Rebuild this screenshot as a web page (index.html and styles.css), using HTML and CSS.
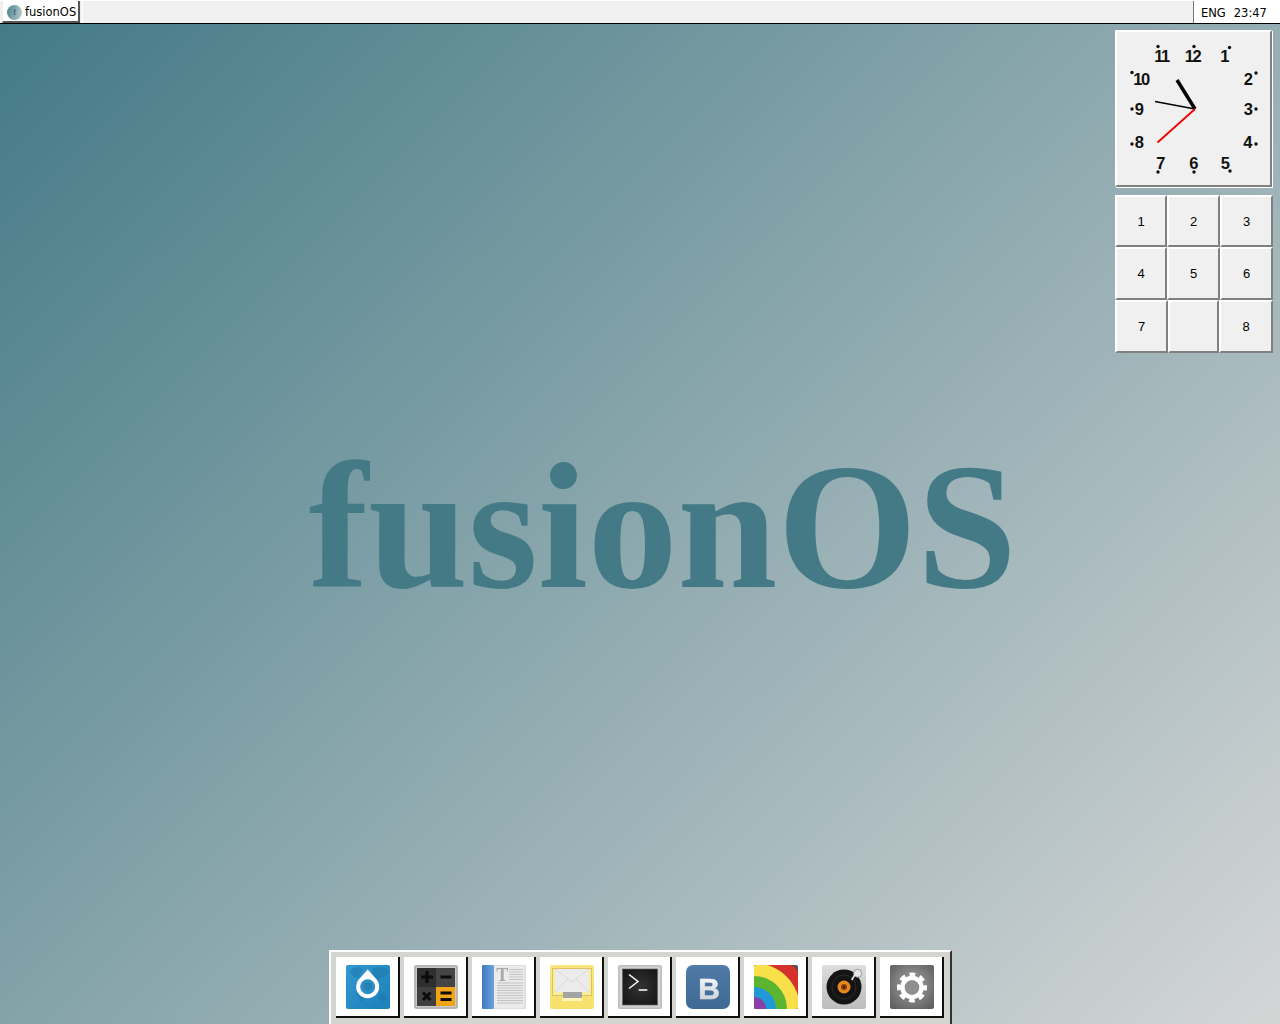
FILE: index.html
```html
<!DOCTYPE html>
<html lang="en">
<head>
<meta charset="utf-8">
<title>fusionOS</title>
<link rel="stylesheet" href="styles.css">
</head>
<body>
<header class="topbar">
  <button class="start"><span class="start-logo">f</span><span>fusionOS</span></button>
  <div class="tray"><span>ENG</span><span>23:47</span></div>
</header>
<main class="desktop">
  <div class="wordmark">fusionOS</div>
  <aside class="widgets">
    <div class="clock">
      <svg class="clock-face" viewBox="1117 32 153 153" width="153" height="153">
        <g class="clock-num" transform="translate(-1 0)">
          <text x="1162.5" y="62">11</text><text x="1193.5" y="62">12</text><text x="1225" y="62">1</text>
          <text x="1248.5" y="85">2</text><text x="1248.5" y="115">3</text><text x="1248" y="147.5">4</text>
          <text x="1225.5" y="168.5">5</text><text x="1194" y="168.5">6</text><text x="1161" y="168.5">7</text>
          <text x="1139.5" y="147.5">8</text><text x="1139.5" y="115">9</text><text x="1142" y="85">10</text>
        </g>
        <g class="clock-dot">
          <circle cx="1158" cy="46.5" r="1.7"/><circle cx="1194" cy="46.5" r="1.7"/><circle cx="1229.5" cy="47.5" r="1.7"/>
          <circle cx="1256" cy="73" r="1.7"/><circle cx="1256" cy="109" r="1.7"/><circle cx="1256" cy="144" r="1.7"/>
          <circle cx="1230" cy="171" r="1.7"/><circle cx="1194" cy="172" r="1.7"/><circle cx="1158" cy="172" r="1.7"/>
          <circle cx="1132" cy="144" r="1.7"/><circle cx="1132" cy="109" r="1.7"/><circle cx="1132" cy="72.5" r="1.7"/>
        </g>
        <line class="hand-hour" x1="1195" y1="109" x2="1177" y2="80"/>
        <line class="hand-minute" x1="1195" y1="109" x2="1155" y2="101.5"/>
        <line class="hand-second" x1="1195" y1="109" x2="1157.5" y2="142.5"/>
      </svg>
    </div>
    <div class="puzzle">
      <div class="row row-a">
        <div class="tile t52">1</div><div class="tile t53">2</div><div class="tile t53">3</div>
      </div>
      <div class="row row-b">
        <div class="tile t52">4</div><div class="tile t53">5</div><div class="tile t53">6</div>
      </div>
      <div class="row row-b">
        <div class="tile t53">7</div><div class="tile t51"></div><div class="tile t54">8</div>
      </div>
    </div>
  </aside>
  <nav class="dock">
    <button class="dock-btn">
      <svg class="icon" viewBox="0 0 44 44" width="44" height="44">
        <defs><linearGradient id="g1" x1="0" y1="0" x2="1" y2="1"><stop offset="0" stop-color="#3199d0"/><stop offset="1" stop-color="#1d80b8"/></linearGradient></defs>
        <rect width="44" height="44" rx="2" fill="url(#g1)"/>
        <path d="M6 3l8-1 3 3-3 4-2 4-4-1-4-5zM12 25l5 1 1 6-3 6-2-6-3-4zM27 3l9-1 7 3-2 6-6 2-3 3-3-4-3-5zM32 30l6-1 3 4-5 4-4-3z" fill="#1a6f9f" opacity=".4"/>
        <path d="M21.700 4.500 L29.500 13.300 A11.500 11.500 0 1 1 13.900 13.300Z" fill="#fff"/>
        <circle cx="21.7" cy="21.7" r="7.500" fill="#2c8fc3"/>
        <path d="M18 18l5-1 3 2-1 5-4 2-3-4z" fill="#1a6f9f" opacity=".45"/>
      </svg>
    </button>
    <button class="dock-btn">
      <svg class="icon" viewBox="0 0 44 44" width="44" height="44">
        <rect width="44" height="44" rx="2" fill="#c9c9c9"/>
        <rect x="1" y="1" width="42" height="42" rx="1.5" fill="none" stroke="#8a8a8a" stroke-width=".6"/>
        <rect x="3" y="3" width="19" height="19" fill="#2f2f2f"/>
        <rect x="22" y="3" width="19" height="19" fill="#454545"/>
        <rect x="3" y="22" width="19" height="19" fill="#404040"/>
        <rect x="22" y="22" width="19" height="19" fill="#f3a412"/>
        <path d="M7 12h12M13 6v12" stroke="#0c0c0c" stroke-width="3.200"/>
        <path d="M26.500 12h11" stroke="#0c0c0c" stroke-width="3"/>
        <path d="M9 27.500l7.500 7.500M16.500 27.500l-7.500 7.500" stroke="#0c0c0c" stroke-width="3"/>
        <path d="M26.500 28h11M26.500 34.500h11" stroke="#0c0c0c" stroke-width="2.800"/>
      </svg>
    </button>
    <button class="dock-btn">
      <svg class="icon" viewBox="0 0 44 44" width="44" height="44">
        <defs><linearGradient id="g3" x1="0" y1="0" x2="1" y2="0"><stop offset="0" stop-color="#3f78c0"/><stop offset="1" stop-color="#6ea3dd"/></linearGradient></defs>
        <rect x="10" width="34" height="44" rx="1" fill="#dedede"/>
        <rect x="12" y="1" width="30" height="42" fill="#ebebeb"/>
        <rect width="12" height="44" rx="1" fill="url(#g3)"/>
        <text class="doc-t" x="20.200" y="16">T</text>
        <path d="M27 4.500h14M27 7h14M27 9.500h14M27 12h14M27 14.500h14M15 18h26M15 20.500h26M15 23h26M15 25.500h26M15 28h26M15 30.500h26M15 33h26M15 35.500h26M15 38h26" stroke="#bcbcbc" stroke-width=".9"/>
      </svg>
    </button>
    <button class="dock-btn">
      <svg class="icon" viewBox="0 0 44 44" width="44" height="44">
        <defs><linearGradient id="g4" x1="0" y1="0" x2="0" y2="1"><stop offset="0" stop-color="#fbe67e"/><stop offset="1" stop-color="#f5e16a"/></linearGradient></defs>
        <rect width="44" height="44" rx="2" fill="url(#g4)"/>
        <rect x="2" y="3" width="40" height="28" fill="#c8a84a" opacity=".55"/>
        <rect x="3" y="4" width="38" height="26" fill="#f7eda0"/>
        <rect x="5" y="4" width="34" height="23" fill="#ececec"/>
        <path d="M5 4l17 13L39 4M5 27l13-13M39 27L26 14" fill="none" stroke="#dadada" stroke-width="1"/>
        <rect x="13" y="27" width="19" height="6" fill="#a3a3a3"/>
        <rect x="12" y="33" width="20" height="3" fill="#fdf6b8"/>
      </svg>
    </button>
    <button class="dock-btn">
      <svg class="icon" viewBox="0 0 44 44" width="44" height="44">
        <defs><radialGradient id="g5" cx=".5" cy=".5" r=".7"><stop offset="0" stop-color="#333"/><stop offset="1" stop-color="#141414"/></radialGradient></defs>
        <rect width="44" height="44" rx="2" fill="#bdbdbd"/>
        <rect x="1.500" y="1.500" width="41" height="41" rx="1" fill="#d2d2d2"/>
        <rect x="4.500" y="4" width="35" height="36" fill="url(#g5)" stroke="#666" stroke-width=".7"/>
        <path d="M11 9.500l9 7-9 7" fill="none" stroke="#fff" stroke-width="1.500"/>
        <path d="M20.700 25h8.600" stroke="#fff" stroke-width="1.500"/>
      </svg>
    </button>
    <button class="dock-btn">
      <svg class="icon" viewBox="0 0 44 44" width="44" height="44">
        <defs>
          <linearGradient id="g6" x1="0" y1="0" x2="0" y2="1"><stop offset="0" stop-color="#507ba8"/><stop offset="1" stop-color="#3e6994"/></linearGradient>
          <linearGradient id="g6b" x1="0" y1="0" x2="0" y2="1"><stop offset="0" stop-color="#fff"/><stop offset="1" stop-color="#c4cdd6"/></linearGradient>
        </defs>
        <rect width="44" height="44" rx="7" fill="url(#g6)"/>
        <text class="vk-b" x="23" y="33.500" fill="url(#g6b)" stroke="url(#g6b)">B</text>
      </svg>
    </button>
    <button class="dock-btn">
      <svg class="icon" viewBox="0 0 44 44" width="44" height="44">
        <defs><clipPath id="c7"><rect width="44" height="44" rx="2"/></clipPath></defs>
        <g clip-path="url(#c7)">
          <rect width="44" height="44" fill="#525252"/>
          <circle cx="0" cy="44" r="58" fill="#d4322a"/>
          <circle cx="0" cy="44" r="46" fill="#f9e04b"/>
          <circle cx="0" cy="44" r="33" fill="#5cb531"/>
          <circle cx="0" cy="44" r="22" fill="#1f9ad6"/>
          <circle cx="0" cy="44" r="12" fill="#8b3fa8"/>
        </g>
      </svg>
    </button>
    <button class="dock-btn">
      <svg class="icon" viewBox="0 0 44 44" width="44" height="44">
        <defs><linearGradient id="g8" x1="0" y1="0" x2="0" y2="1"><stop offset="0" stop-color="#dcdcdc"/><stop offset="1" stop-color="#bdbdbd"/></linearGradient></defs>
        <rect width="44" height="44" rx="2" fill="url(#g8)"/>
        <circle cx="22" cy="22" r="17.500" fill="#141414"/>
        <circle cx="22" cy="22" r="12" fill="none" stroke="#2c2c2c" stroke-width="1"/>
        <circle cx="22" cy="22" r="6.500" fill="#e48a1c"/>
        <circle cx="22" cy="22" r="3" fill="#8d3a14"/>
        <circle cx="22" cy="22" r="1" fill="#222"/>
        <circle cx="35.600" cy="8.300" r="4" fill="#e8e8e8" stroke="#8c8c8c" stroke-width=".8"/>
        <path d="M33.500 10l-3 5.500-1.500-1 3-5z" fill="#e6e6e6"/>
      </svg>
    </button>
    <button class="dock-btn">
      <svg class="icon" viewBox="0 0 44 44" width="44" height="44">
        <defs><radialGradient id="g9" cx=".5" cy=".45" r=".7"><stop offset="0" stop-color="#a4a4a4"/><stop offset="1" stop-color="#5c5c5c"/></radialGradient></defs>
        <rect width="44" height="44" rx="2" fill="url(#g9)"/>
        <circle cx="22" cy="22.500" r="12.500" fill="none" stroke="#fff" stroke-width="5" stroke-dasharray="5.500 4.320" stroke-dashoffset="2.750"/>
        <circle cx="22" cy="22.500" r="9.500" fill="none" stroke="#fff" stroke-width="4.500"/>
        <circle cx="22" cy="22.500" r="7.200" fill="#8f8f8f"/>
      </svg>
    </button>
  </nav>
</main>
</body>
</html>
```
FILE: styles.css
```css
* { box-sizing: border-box; }
html, body { margin: 0; height: 100%; }
body {
  display: flex;
  flex-direction: column;
  height: 1024px;
  overflow: hidden;
  font-family: "Liberation Sans", Arial, sans-serif;
}
.topbar {
  height: 24px;
  flex: none;
  display: flex;
  justify-content: space-between;
  align-items: stretch;
  background: #f0f0f0;
  border-top: 1px solid #fff;
  border-bottom: 1px solid #000;
  padding-left: 2px;
}
.start {
  width: 78px;
  height: 22px;
  padding: 2px 0 0 4px;
  display: flex;
  align-items: center;
  gap: 3px;
  background: #fff;
  border: 0;
  border-right: 2px solid #555;
  border-bottom: 2px solid #555;
  border-left: 1px solid #eee;
  box-shadow: 2px 0 0 #f0f0f0, 3px 0 0 #fff;
  font: 11.500px "DejaVu Sans", sans-serif;
  color: #000;
}
.start-logo {
  width: 15px;
  height: 15px;
  flex: none;
  border-radius: 50%;
  background: linear-gradient(100deg, #4d808c, #b9cdd0);
  color: #3c6c78;
  font: bold 8px "Liberation Serif", serif;
  line-height: 15px;
  text-align: center;
}
.tray {
  width: 87px;
  display: flex;
  gap: 8px;
  padding: 1px 0 0 7px;
  align-items: center;
  background: #fff;
  border-left: 1px solid #777;
  font: 11.500px "DejaVu Sans", sans-serif;
  color: #000;
}
.desktop {
  flex: 1;
  display: grid;
  grid-template: 1fr / 1fr;
  background: linear-gradient(135deg, #447a86, #d4d6d6);
  min-height: 0;
}
.desktop > * { grid-area: 1 / 1; }
.wordmark {
  place-self: start;
  margin: 400px 0 0 308.500px;
  font: bold 179.500px/1.15 "Liberation Serif", serif;
  color: #447a86;
}
.widgets {
  justify-self: end;
  align-self: start;
  margin: 6px 7px 0 0;
  width: 158px;
  display: flex;
  flex-direction: column;
  gap: 8px;
}
.clock {
  width: 157px;
  height: 157px;
  background: #f0f0f0;
  border: 2px solid;
  border-color: #fff #808080 #808080 #fff;
  box-shadow: 1px 1px 0 #fff;
}
.clock-face { display: block; }
.clock-num text {
  font: bold 16.500px "Liberation Sans", sans-serif;
  letter-spacing: -1.500px;
  text-anchor: middle;
  fill: #111;
}
.clock-dot { fill: #111; }
.hand-hour { stroke: #000; stroke-width: 3.500; }
.hand-minute { stroke: #000; stroke-width: 1.600; }
.hand-second { stroke: #f00000; stroke-width: 1.800; }
.puzzle { display: flex; flex-direction: column; }
.row { display: flex; }
.row-a { height: 52px; }
.row-a .tile { padding-top: 1px; }
.row-b { height: 53px; }
.tile {
  display: flex;
  align-items: center;
  justify-content: center;
  background: #f0f0f0;
  border: 2px solid;
  border-color: #fff #808080 #808080 #fff;
  font-size: 13px;
  color: #000;
}
.t51 { width: 51px; }
.t52 { width: 52px; }
.t53 { width: 53px; }
.t54 { width: 54px; }
.dock {
  justify-self: center;
  align-self: end;
  width: 623px;
  height: 74px;
  padding: 5px 0 0 5px;
  display: flex;
  gap: 4px;
  background: #d4d5d1;
  border: 2px solid;
  border-color: #fff #333 transparent #fff;
  border-bottom: 0;
}
.dock-btn {
  width: 64px;
  height: 61px;
  padding: 0 0 0 10px;
  display: flex;
  align-items: flex-start;
  background: #fff;
  border: 0;
  border-right: 2px solid #111;
  border-bottom: 2px solid #111;
}
.icon {
  display: block;
  margin-top: 8px;
  flex: none;
  filter: blur(.35px);
}
.doc-t {
  font: bold 18px "Liberation Serif", serif;
  text-anchor: middle;
  fill: #a8a8a8;
}
.vk-b {
  font: bold 30px "Liberation Sans", sans-serif;
  stroke-width: .6;
  text-anchor: middle;
}
```
